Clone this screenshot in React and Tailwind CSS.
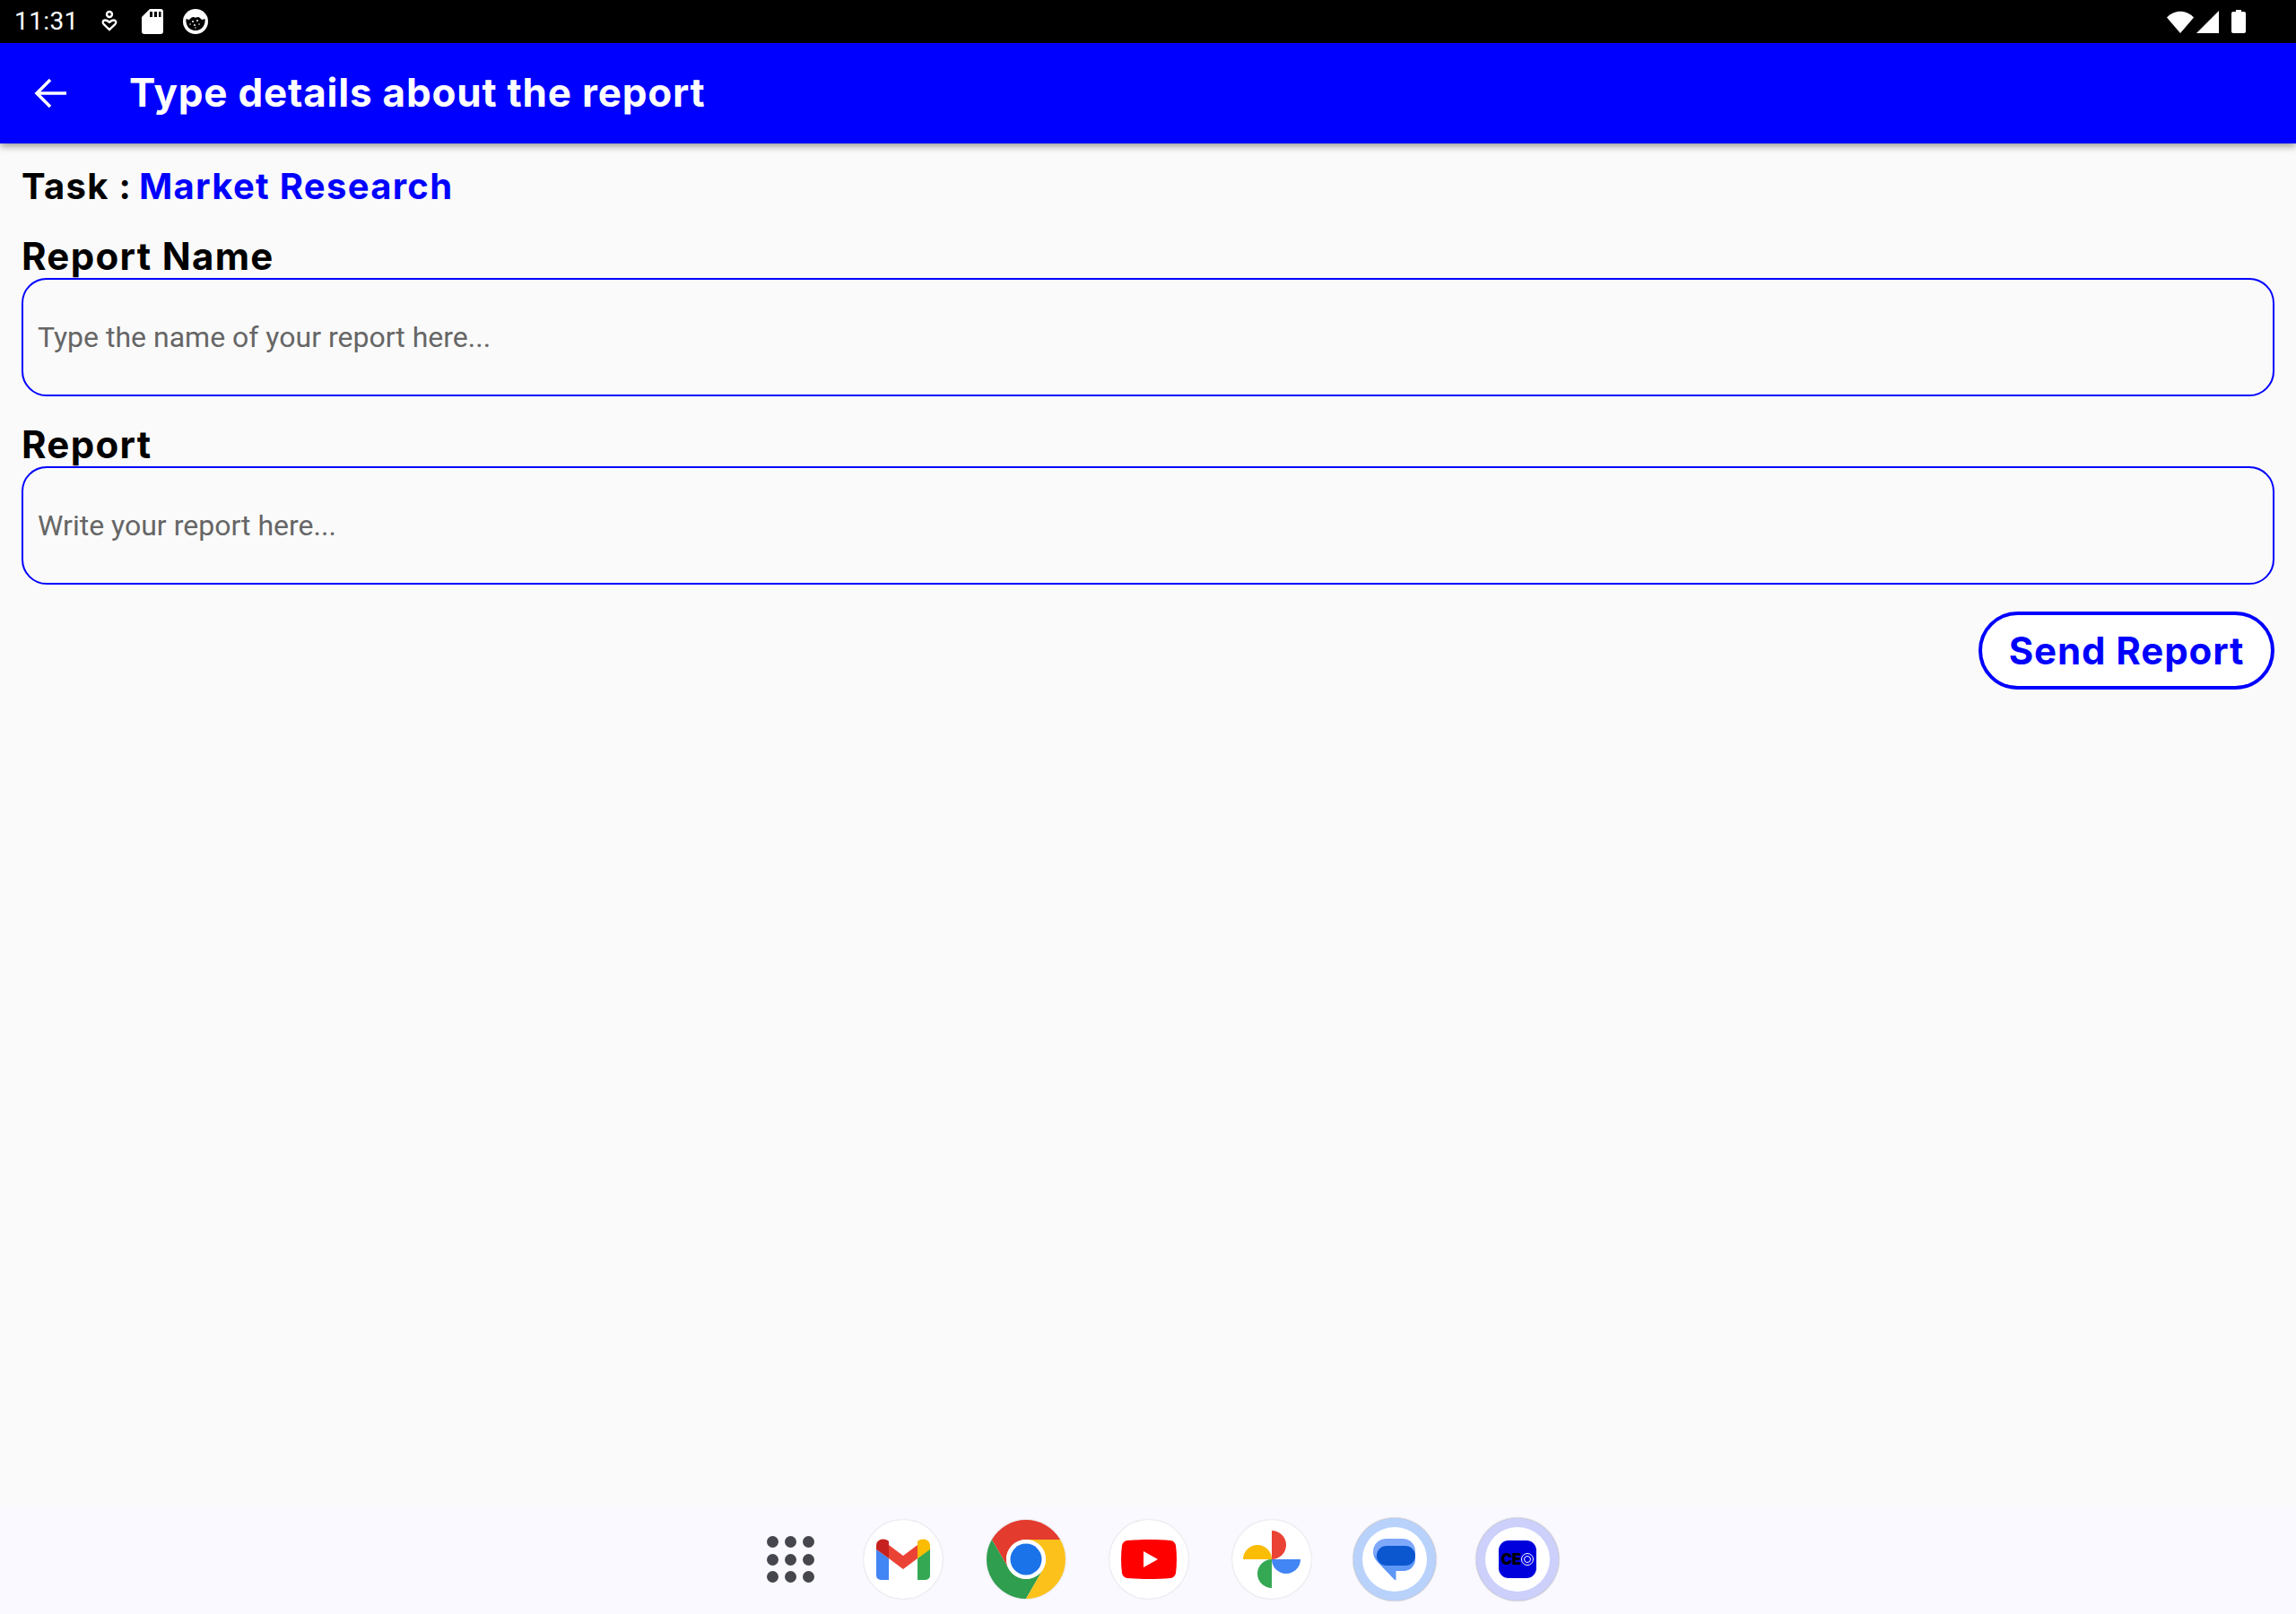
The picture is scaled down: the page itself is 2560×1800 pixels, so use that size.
const heading = { fontFamily: '"Inter", sans-serif' };

// ─── Status bar icons ────────────────────────────────────────────────────────
function StatusLeft() {
  return (
    <div className="flex items-center">
      <span className="font-['Roboto',sans-serif] text-[28px] leading-none text-white tracking-[0.4px] w-[98px] pl-4">11:31</span>
      <svg width="20" height="26" viewBox="0 0 20 26" className="ml-[14px]" fill="none" stroke="#fff" strokeWidth="2.4">
        <circle cx="10" cy="5" r="3" />
        <path d="M5 11.500c2 0 3.500 1 5 2.200 1.500-1.200 3-2.200 5-2.200 2.500 0 3 3 1.200 4.600L10 22l-6.200-5.900C2 14.500 2.500 11.500 5 11.500z" />
      </svg>
      <svg width="24" height="28" viewBox="0 0 24 28" className="ml-[26px]">
        <path fill="#fff" d="M9 0h12a3 3 0 0 1 3 3v22a3 3 0 0 1-3 3H3a3 3 0 0 1-3-3V9z" />
        <path fill="#000" d="M9 3h3v6H9zM14 3h3v6h-3zM19 3h2.500v6H19z" />
      </svg>
      <svg width="28" height="28" viewBox="0 0 28 28" className="ml-[22px]">
        <circle cx="14" cy="14" r="14" fill="#fff" />
        <path fill="#000" d="M3.500 11c1 0 2 1 3 1 1.500 0 2.500-3 4.500-3 1 0 2 .7 3 .7S16 9 17 9c2 0 3 3 4.500 3 1 0 2-1 3-1 .8 6-2.500 13-10.500 13S2.700 17 3.500 11z" />
        <g fill="#fff">
          <circle cx="11" cy="14" r="1" /><circle cx="16" cy="13" r="1" /><circle cx="13" cy="18" r="1" />
          <circle cx="18" cy="17" r=".8" /><circle cx="8" cy="17" r=".8" /><circle cx="14" cy="21" r=".7" />
        </g>
      </svg>
    </div>
  );
}

function StatusRight() {
  return (
    <div className="flex items-center pr-14">
      <svg width="30" height="25" viewBox="0 0 30 25">
        <path fill="#fff" d="M0 7.500C8-1.500 22-1.500 30 7.500L15 25z" />
      </svg>
      <svg width="25" height="25" viewBox="0 0 25 25" className="ml-[3px]">
        <path fill="#fff" d="M25 0v25H0z" />
      </svg>
      <svg width="16" height="26" viewBox="0 0 16 26" className="ml-[14px]">
        <path fill="#fff" d="M5 0h6v2h3a2 2 0 0 1 2 2v20a2 2 0 0 1-2 2H2a2 2 0 0 1-2-2V4a2 2 0 0 1 2-2h3z" />
      </svg>
    </div>
  );
}

// ─── Form field ──────────────────────────────────────────────────────────────
function Field({ label, placeholder }) {
  return (
    <div>
      <div className="text-[42px] leading-[48px] font-bold text-black tracking-[1.300px]" style={heading}>{label}</div>
      <input
        readOnly
        placeholder={placeholder}
        className="block w-full h-[132px] border-2 border-[#0000ff] rounded-[28px] px-4 bg-transparent font-['Roboto',sans-serif] text-[32px] outline-none placeholder:text-[#666666]"
      />
    </div>
  );
}

// ─── Dock icons ──────────────────────────────────────────────────────────────
function DockCircle({ children }) {
  return (
    <div className="w-[88px] h-[88px] rounded-full bg-white shadow-[0_0_2px_rgba(0,0,0,0.2)] flex items-center justify-center">
      {children}
    </div>
  );
}

function AppGrid() {
  return (
    <div className="w-[54px] grid grid-cols-3 gap-[6.500px] ml-[2px]">
      {Array.from({ length: 9 }).map((_, i) => (
        <div key={i} className="w-[13px] h-[13px] rounded-full bg-[#46464f]" />
      ))}
    </div>
  );
}

function Gmail() {
  return (
    <svg width="60" height="46" viewBox="0 0 60 46">
      <path fill="#4285f4" d="M0 12l14 10v24H5a5 5 0 0 1-5-5z" />
      <path fill="#34a853" d="M46 22l14-11v30a5 5 0 0 1-5 5h-9z" />
      <path fill="#ea4335" d="M14 7l16 12L46 7v15L30 34 14 22z" />
      <path fill="#c5221f" d="M0 8c0-7 8-10 14-5v19L0 12z" />
      <path fill="#fbbc04" d="M46 3c6-5 14-2 14 5v4L46 22z" />
    </svg>
  );
}

function Chrome() {
  return (
    <svg width="88" height="88" viewBox="0 0 88 88">
      <path fill="#e33b2e" d="M5.900 22A44 44 0 0 1 82.100 22H44A22 22 0 0 0 24.950 55z" />
      <path fill="#2f9e4f" d="M5.900 22L24.950 55A22 22 0 0 0 63.050 55L44 88A44 44 0 0 1 5.900 22z" />
      <path fill="#fcc21b" d="M82.100 22A44 44 0 0 1 44 88L63.050 55A22 22 0 0 0 44 22z" />
      <circle cx="44" cy="44" r="22" fill="#fff" />
      <circle cx="44" cy="44" r="17.500" fill="#1a73e8" />
    </svg>
  );
}

function YouTube() {
  return (
    <svg width="62" height="44" viewBox="0 0 62 44">
      <path fill="#ff0000" d="M7 1c15-1.300 33-1.300 48 0 3 .3 5.500 2.500 6 5.500 1.300 10 1.300 21 0 31-.5 3-3 5.200-6 5.500-15 1.300-33 1.300-48 0-3-.3-5.500-2.500-6-5.500-1.300-10-1.300-21 0-31C1.500 3.500 4 1.300 7 1z" />
      <path fill="#fff" d="M25 13l16 9-16 9z" />
    </svg>
  );
}

function Photos() {
  return (
    <svg width="64" height="64" viewBox="0 0 64 64">
      <path fill="#ea4335" d="M32 0A16 16 0 0 1 32 32z" />
      <path fill="#4285f4" d="M32 32H64A16 16 0 0 1 32 32z" />
      <path fill="#34a853" d="M32 32V64A16 16 0 0 1 32 32z" />
      <path fill="#fbbc04" d="M32 32H0A16 16 0 0 1 32 32z" />
    </svg>
  );
}

function Messages() {
  return (
    <div className="w-[92px] h-[92px] rounded-full bg-[#b8d2fc] shadow-[0_0_2px_rgba(0,0,0,0.45)] flex items-center justify-center">
      <div className="w-[72px] h-[72px] rounded-full bg-white flex items-center justify-center">
        <svg width="48" height="47" viewBox="0 0 48 47">
          <path fill="#5e97f6" d="M0 14c0 5 2 9 5 12l19 20c.7.7 1.500.3 1.500-.7V36H34a13 13 0 0 0 13-13V14z" />
          <path fill="#7fa8fb" d="M15 0H33A14 14 0 0 1 47 14V20H4C1.500 18 0 16 0 14 0 6 7 0 15 0z" />
          <path fill="#0b57d0" d="M15 8H36A11 11 0 0 1 36 30H15A11 11 0 0 1 15 8z" />
        </svg>
      </div>
    </div>
  );
}

function CeoApp() {
  return (
    <div className="w-[92px] h-[92px] rounded-full bg-[#ccd0fb] shadow-[0_0_2px_rgba(0,0,0,0.45)] flex items-center justify-center">
      <div className="w-[72px] h-[72px] rounded-full bg-white flex items-center justify-center">
        <div className="w-[42px] h-[42px] rounded-[11px] bg-[#0000dd] flex items-center justify-center">
          <span className="text-[17px] leading-none font-black text-black tracking-[-0.5px]" style={heading}>CE</span>
          <svg width="14" height="16" viewBox="0 0 14 16" fill="none" stroke="#fff" strokeWidth="1">
            <circle cx="7" cy="8" r="6.500" />
            <circle cx="7" cy="8" r="3.500" />
          </svg>
        </div>
      </div>
    </div>
  );
}

// ─── Page ────────────────────────────────────────────────────────────────────
export default function App() {
  return (
    <div className="w-[2560px] h-[1800px] bg-[#fafafa] flex flex-col overflow-hidden">
      <div className="h-12 bg-black flex items-center justify-between">
        <StatusLeft />
        <StatusRight />
      </div>

      <div className="h-28 bg-[#0000ff] flex items-center shadow-[0_3px_8px_rgba(0,0,0,0.4)] relative">
        <svg width="36" height="34" viewBox="0 0 36 34" className="ml-[38px]" fill="none" stroke="#fff" strokeWidth="3.500">
          <path d="M36 17H3M18 2L3 17l15 15" />
        </svg>
        <div className="ml-[70px] text-[44px] font-bold text-white tracking-[0.800px] pb-[2px]" style={heading}>
          Type details about the report
        </div>
      </div>

      <div className="flex-1 px-6 pt-[22px]">
        <div className="text-[40px] leading-[52px] font-bold text-black tracking-[1.300px] mb-7" style={heading}>
          Task : <span className="text-[#0000ff] ml-[-3px]">Market Research</span>
        </div>
        <div className="flex flex-col gap-[30px]">
          <Field label="Report Name" placeholder="Type the name of your report here..." />
          <Field label="Report" placeholder="Write your report here..." />
        </div>
        <div className="flex justify-end mt-[30px]">
          <button className="h-[87px] w-[330px] rounded-full border-4 border-[#0000ff] bg-white text-[#0000ff] text-[42px] font-bold tracking-[0.900px]" style={heading}>
            Send Report
          </button>
        </div>
      </div>

      <div className="h-[120px] bg-[#f9f9ff] flex items-center justify-center gap-[49px] pb-[2px] pl-3">
        <div className="w-[88px] flex justify-center mr-[-11px]"><AppGrid /></div>
        <DockCircle><Gmail /></DockCircle>
        <DockCircle><Chrome /></DockCircle>
        <DockCircle><YouTube /></DockCircle>
        <DockCircle><Photos /></DockCircle>
        <div className="mx-[-2px] flex gap-[45px]">
          <Messages />
          <CeoApp />
        </div>
      </div>
    </div>
  );
}
